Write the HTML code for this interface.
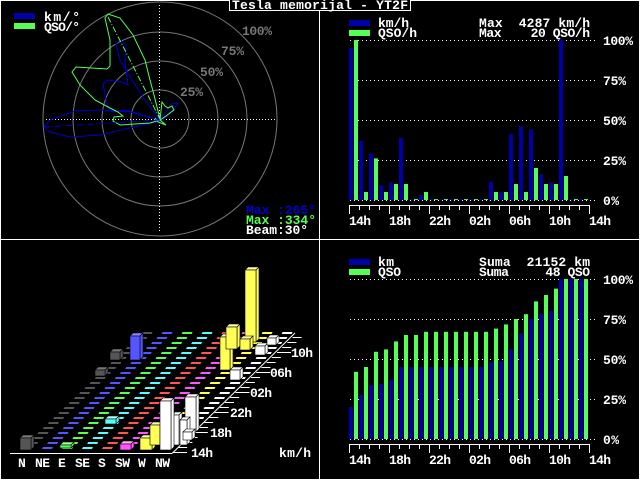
<!DOCTYPE html>
<html><head><meta charset="utf-8"><style>
html,body{margin:0;padding:0;background:#000;width:640px;height:480px;overflow:hidden}
svg{display:block}
text{font-family:"Liberation Mono",monospace;font-weight:bold;font-size:13px;fill:#fff;white-space:pre}
</style></head><body>
<svg id="s" width="640" height="480" viewBox="0 0 640 480" xmlns="http://www.w3.org/2000/svg" xml:space="preserve">
<rect x="0" y="0" width="640" height="480" fill="#000"/>
<rect x="0.5" y="0.5" width="639" height="479" fill="none" stroke="#fff"/>
<line x1="319.5" y1="0" x2="319.5" y2="480" stroke="#fff"/>
<line x1="0" y1="239.5" x2="640" y2="239.5" stroke="#fff"/>
<g fill="none" stroke="#777">
<circle cx="160" cy="119" r="117"/><circle cx="160" cy="119" r="87"/><circle cx="160" cy="119" r="58"/><circle cx="160" cy="119" r="29"/>
</g>
<g stroke="#fff" stroke-dasharray="1 2">
<line x1="46" y1="119.5" x2="276" y2="119.5"/><line x1="159.5" y1="5" x2="159.5" y2="233"/>
</g>
<text x="242" y="35" style="fill:#777" textLength="30">100%</text>
<text x="221" y="55" style="fill:#777" textLength="23">75%</text>
<text x="200" y="76" style="fill:#777" textLength="23">50%</text>
<text x="180" y="96" style="fill:#777" textLength="23">25%</text>
<rect x="14" y="13" width="21" height="6" fill="#0000aa"/>
<rect x="14" y="23" width="21" height="6" fill="#55ff55"/>
<text x="44" y="21" textLength="36">km/°</text>
<text x="44" y="31" textLength="36">QSO/°</text>
<g fill="none" stroke-width="1">
<polyline stroke="#0000cc" points="160,120 130,112 100,110 75,111 50,120 44,127 50,132 70,137 100,135 130,128 160,121"/>
<polyline stroke="#0000cc" points="160,120 145,100 132,80 120,60 116,44 120,40 126,45 125,62 128,85 122,82 108,80 103,84 105,95 108,108 112,112 125,110 160,120"/>
<polyline stroke="#0000cc" points="160,120 172,103 178,104 163,120"/>
<polyline stroke="#55ff55" points="160,119 154,95 150,80 145,60 133,35 120,18 108,14 105,18 110,40 110,66 107,69 76,67 72,72 80,85 95,100 110,108 118,112 123,116 114,117 113,121 120,125 150,123 160,120"/>
<polyline stroke="#55ff55" points="160,120 162,102 165,106 168,108 172,106 174,110 166,116 160,120 166,125 158,122 155,118"/>
<line stroke="#55ff55" stroke-dasharray="6 2 1 2" x1="108" y1="17" x2="160" y2="119"/>
<line stroke="#0000cc" stroke-dasharray="6 2 1 2" x1="44" y1="127" x2="160" y2="120"/>
</g>
<text x="246" y="214" style="fill:#0000cc" textLength="70">Max :265°</text>
<text x="246" y="224" style="fill:#55ff55" textLength="70">Max :334°</text>
<text x="246" y="234" textLength="62">Beam:30°</text>
<rect x="229.5" y="-1" width="181" height="11.5" fill="#000" stroke="#fff"/>
<text x="232" y="9" textLength="176">Tesla memorijal - YT2F</text>
<rect x="349" y="20" width="21" height="6" fill="#0000aa"/>
<rect x="349" y="30" width="21" height="6" fill="#55ff55"/>
<text x="378" y="27" textLength="31">km/h</text>
<text x="378" y="37" textLength="39">QSO/h</text>
<text x="479" y="27" textLength="111">Max  4287 km/h</text>
<text x="479" y="37" textLength="111">Max    20 QSO/h</text>
<g id="g1"></g>
<text x="603" y="45" textLength="30">100%</text>
<text x="603" y="85" textLength="23">75%</text>
<text x="603" y="125" textLength="23">50%</text>
<text x="603" y="165" textLength="23">25%</text>
<text x="603" y="205" textLength="16">0%</text>
<rect x="349" y="259" width="21" height="6" fill="#0000aa"/>
<rect x="349" y="269" width="21" height="6" fill="#55ff55"/>
<text x="378" y="266" textLength="16">km</text>
<text x="378" y="276" textLength="23">QSO</text>
<text x="479" y="266" textLength="111">Suma  21152 km</text>
<text x="479" y="276" textLength="111">Suma     48 QSO</text>
<text x="603" y="284" textLength="30">100%</text>
<text x="603" y="324" textLength="23">75%</text>
<text x="603" y="364" textLength="23">50%</text>
<text x="603" y="404" textLength="23">25%</text>
<text x="603" y="444" textLength="16">0%</text>
<g id="g3"></g>
<text x="191" y="457" textLength="22">14h</text>
<text x="210" y="437" textLength="22">18h</text>
<text x="230" y="417" textLength="22">22h</text>
<text x="250" y="397" textLength="22">02h</text>
<text x="270" y="377" textLength="22">06h</text>
<text x="291" y="357" textLength="22">10h</text>
<text x="279" y="457" textLength="32">km/h</text>
<text x="18" y="467">N</text>
<text x="35" y="467" textLength="15">NE</text>
<text x="58" y="467">E</text>
<text x="75" y="467" textLength="15">SE</text>
<text x="98" y="467">S</text>
<text x="115" y="467" textLength="15">SW</text>
<text x="138" y="467">W</text>
<text x="155" y="467" textLength="15">NW</text>
</svg>
<script>
var NS="http://www.w3.org/2000/svg";
function el(p,t,a){var e=document.createElementNS(NS,t);for(var k in a)e.setAttribute(k,a[k]);p.appendChild(e);return e;}
var g1=document.getElementById('g1'),g3=document.getElementById('g3');
function chart(base,bv,gv){
 for(var i=0;i<5;i++){el(g1,'line',{x1:350,x2:598,y1:base-40*i+0.5,y2:base-40*i+0.5,stroke:'#fff','stroke-dasharray':'1 3'});}
 for(var i=0;i<24;i++){var h=bv[i]*1.6;el(g1,'rect',{x:349+10*i,y:base-h,width:4,height:h,fill:'#0000aa'});
  h=gv[i]*1.6;el(g1,'rect',{x:354+10*i,y:base-h,width:4,height:h,fill:'#55ff55'});}
 el(g1,'line',{x1:349,x2:590,y1:base+5.5,y2:base+5.5,stroke:'#fff'});
 for(var i=0;i<=24;i++){var x=349.5+10*i;el(g1,'line',{x1:x,x2:x,y1:base+5,y2:base+(i%4==0?14:10),stroke:'#fff'});}
 var L=['14h','18h','22h','02h','06h','10h','14h'];
 for(var i=0;i<7;i++){var t=el(g1,'text',{x:349+40*i,y:base+25,textLength:22});t.textContent=L[i];}
}
chart(200,[95,37,29,9,11,39,.6,3,.6,.6,.6,.6,.6,.6,11.5,5,41,46,44,16,11,100,.6,.6],[100,5,26,5,10,10,.6,5,.6,.6,.6,.6,.6,.6,5,5,10,5,20,10,10,15,.6,.6]);
chart(439,[20,27.5,33.5,34.5,37,45,45,45,45,45,45,45,45,45,48,48.6,56,66,75,78,80,100,100,100],[42,45,54.5,56,61,65,65,67,67,67,67,67,67,67,69,71.6,75,78,86,90,94,100,100,100]);
var C=['#555555','#5555ff','#55ff55','#55ffff','#ff5555','#ff55ff','#ffff55','#ffffff'];
for(var r=23;r>=0;r--){for(var c=0;c<8;c++){var x=22+20*c+5.2*r,y=447-5*r;el(g3,'polygon',{points:x+','+(y+2)+' '+(x+1)+','+y+' '+(x+11)+','+y+' '+(x+10)+','+(y+2),fill:C[c]});}}
el(g3,'line',{x1:10,x2:172,y1:453.5,y2:453.5,stroke:'#fff'});
el(g3,'line',{x1:172,x2:295,y1:453.5,y2:333,stroke:'#fff'});
for(var r=0;r<24;r++){var x=173+5.2*r,y=452.5-5*r;el(g3,'line',{x1:x,x2:x+(r%4==0?14:9),y1:y,y2:y,stroke:'#fff'});}
function bar(x,y,w,h,c,t){el(g3,'polygon',{points:x+','+y+' '+(x+3)+','+(y-3)+' '+(x+w+3)+','+(y-3)+' '+(x+w)+','+y,fill:t,stroke:'#000','stroke-width':0.6});
 el(g3,'polygon',{points:(x+w)+','+y+' '+(x+w+3)+','+(y-3)+' '+(x+w+3)+','+(y+h-3)+' '+(x+w)+','+(y+h),fill:c,stroke:'#000','stroke-width':0.6});
 el(g3,'rect',{x:x,y:y,width:w,height:h,fill:c,stroke:'#000','stroke-width':0.6});}
var Y='#ffff55',YT='#ffffaa',W='#ffffff',WT='#ffffff';
bar(110,352,10,8,'#555555','#777777');
bar(95,370,10,6,'#555555','#777777');
bar(130,336,10,24,'#5555ff','#8888ff');
bar(20,438,11,12,'#555555','#777777');
bar(60,445,11,3,'#55ff55','#99ff99');
bar(105,419,11,5,'#55ffff','#aaffff');
bar(120,444,11,6,'#ff55ff','#ffaaff');
bar(140,438,12,12,Y,YT);
bar(150,425,10,20,Y,YT);
bar(185,397,11,35,W,WT);
bar(172,415,7,30,W,WT);
bar(180,420,7,25,W,WT);
bar(183,432,9,8,W,WT);
bar(160,401,11,49,W,WT);
bar(220,337,10,33,Y,YT);
bar(226,327,11,22,Y,YT);
bar(245,270,11,72,Y,YT);
bar(240,339,10,11,Y,YT);
bar(230,370,10,10,W,WT);
bar(255,346,10,9,W,WT);
bar(267,338,9,7,W,WT);
</script>
</body></html>
